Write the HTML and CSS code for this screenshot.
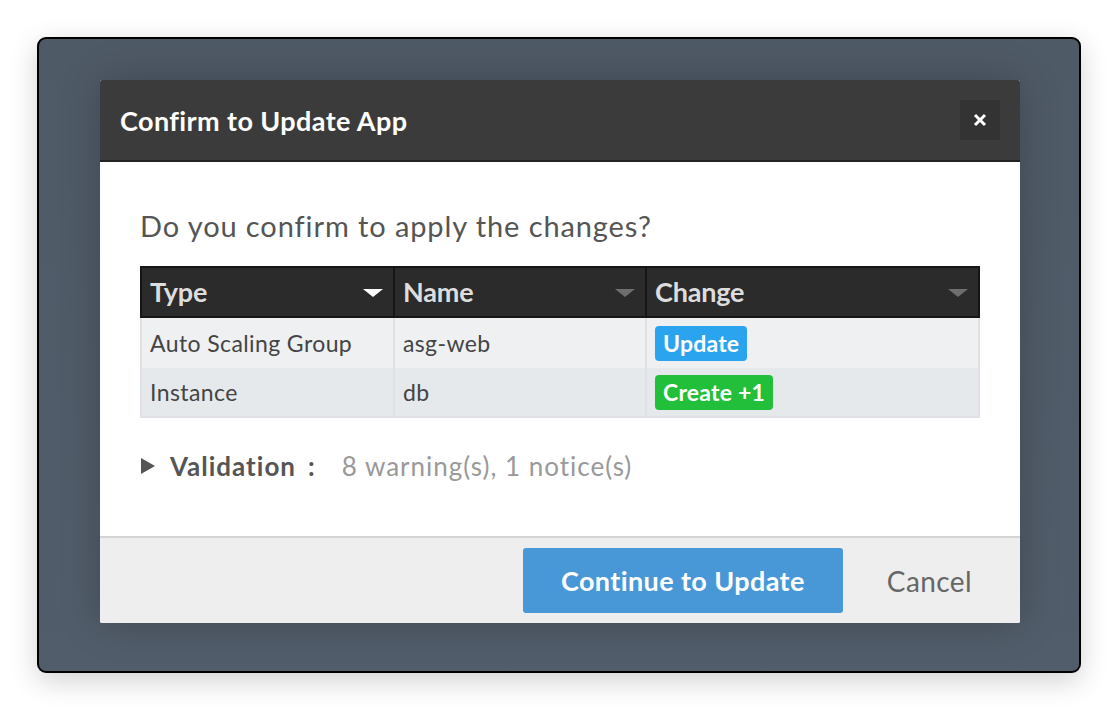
FILE: index.html
```html
<!DOCTYPE html>
<html>
<head>
<meta charset="utf-8">
<link rel="stylesheet" href="styles.css">
</head>
<body>
<div class="window">
  <div class="dialog">
    <div class="dlg-head">
      <div class="dlg-title">Confirm to Update App</div>
      <div class="dlg-close">
        <svg width="16" height="16" viewBox="0 0 16 16"><path d="M3 3 L13 13 M13 3 L3 13" stroke="#fff" stroke-width="3" stroke-linecap="butt" fill="none"/></svg>
      </div>
    </div>
    <div class="dlg-body">
      <div class="question">Do you confirm to apply the changes?</div>
      <table class="tbl">
        <thead>
          <tr>
            <th class="c1"><span>Type</span><i class="sort active"></i></th>
            <th class="c2"><span>Name</span><i class="sort"></i></th>
            <th class="c3"><span>Change</span><i class="sort"></i></th>
          </tr>
        </thead>
        <tbody>
          <tr class="r1">
            <td>Auto Scaling Group</td>
            <td>asg-web</td>
            <td><span class="badge update">Update</span></td>
          </tr>
          <tr class="r2">
            <td>Instance</td>
            <td>db</td>
            <td><span class="badge create">Create +1</span></td>
          </tr>
        </tbody>
      </table>
      <div class="validation">
        <i class="tri"></i>
        <span class="v-label">Validation</span>
        <span class="v-colon">:</span>
        <span class="v-info">8 warning(s), 1 notice(s)</span>
      </div>
    </div>
    <div class="dlg-foot">
      <button class="btn-primary">Continue to Update</button>
      <button class="btn-link">Cancel</button>
    </div>
  </div>
</div>
</body>
</html>
```

FILE: styles.css
```css
html, body {
  margin: 0;
  padding: 0;
  background: #ffffff;
  font-family: Lato, "Open Sans", "Liberation Sans", sans-serif;
}
body {
  padding: 37px 0 0 37px;
  height: 710px;
  box-sizing: border-box;
}
.window {
  width: 1044px;
  height: 636px;
  box-sizing: border-box;
  border: 2px solid #000;
  border-radius: 9px;
  background: linear-gradient(180deg, #4f5a67 0%, #525d6b 100%);
  box-shadow: 0 8px 28px rgba(0, 0, 0, 0.18);
  padding: 41px 59px 0 61px;
}
.dialog {
  width: 920px;
  height: 543px;
  display: flex;
  flex-direction: column;
  background: #fff;
  box-shadow: 0 0 40px rgba(0, 0, 0, 0.22);
  border-radius: 2px;
  overflow: hidden;
}
.dlg-head {
  height: 80px;
  background: #3b3b3b;
  border-bottom: 2px solid #222;
  display: flex;
  align-items: center;
  justify-content: space-between;
  padding: 0 20px;
  flex: none;
}
.dlg-title {
  color: #fff;
  font-weight: 700;
  font-size: 27px;
  letter-spacing: 0.4px;
}
.dlg-close {
  width: 40px;
  height: 40px;
  background: #333;
  border-radius: 3px;
  display: flex;
  align-items: center;
  justify-content: center;
}
.dlg-body {
  flex: 1;
  padding: 47px 40px 0 40px;
}
.question {
  font-size: 29px;
  color: #555;
  line-height: 34px;
  letter-spacing: 0.9px;
}
.tbl {
  margin-top: 23px;
  width: 840px;
  border-collapse: collapse;
  table-layout: fixed;
}
.tbl th {
  background: #2b2b2b;
  color: #ddd;
  font-size: 27px;
  font-weight: 700;
  text-align: left;
  height: 50px;
  padding: 0 22px 2px 8px;
  border: 2px solid #161616;
  position: relative;
  letter-spacing: -0.2px;
  box-sizing: border-box;
}
.tbl th.c1 { width: 253px; }
.tbl th.c2 { width: 252px; }
.sort {
  position: absolute;
  right: 10px;
  top: 50%;
  margin-top: -3px;
  width: 0;
  height: 0;
  border-left: 10px solid transparent;
  border-right: 10px solid transparent;
  border-top: 8px solid #6e6e6e;
}
.sort.active { border-top-color: #fff; }
.tbl td {
  font-size: 23px;
  color: #444;
  padding: 0 8px;
  letter-spacing: 0.4px;
  border-left: 2px solid #dfe1e4;
  border-right: 2px solid #dfe1e4;
}
.tbl tr.r1 td { background: #eef0f2; height: 50px; }
.tbl tr.r2 td { background: #e6e9ec; height: 48px; border-bottom: 2px solid #dfe1e4; }
.badge {
  display: inline-block;
  color: #fff;
  font-weight: 700;
  font-size: 23px;
  line-height: 35px;
  padding: 0 8px;
  border-radius: 4px;
  letter-spacing: 0.2px;
}
.badge.update { background: #2ba4ef; }
.badge.create { background: #22bf3b; }
.validation {
  margin-top: 32px;
  display: flex;
  align-items: center;
  font-size: 26px;
  line-height: 32px;
  letter-spacing: 1px;
}
.tri {
  width: 0;
  height: 0;
  border-top: 8px solid transparent;
  border-bottom: 8px solid transparent;
  border-left: 14px solid #555;
  margin: 0 15px 0 1px;
}
.v-label {
  color: #555;
  font-weight: 700;
}
.v-colon {
  color: #555;
  font-weight: 700;
  margin-left: 12px;
}
.v-info {
  color: #999;
  margin-left: 26px;
}
.dlg-foot {
  height: 87px;
  flex: none;
  background: #eee;
  border-top: 2px solid #d4d4d4;
  display: flex;
  align-items: center;
  justify-content: flex-end;
  padding: 0 48px 0 0;
  box-sizing: border-box;
}
.btn-primary {
  width: 320px;
  height: 65px;
  background: #4897d6;
  color: #fff;
  border: none;
  border-radius: 3px;
  font-family: Lato, "Open Sans", sans-serif;
  font-weight: 700;
  font-size: 27px;
  letter-spacing: 0.4px;
}
.btn-link {
  background: none;
  border: none;
  color: #666;
  font-family: Lato, "Open Sans", sans-serif;
  font-size: 28px;
  letter-spacing: 0.4px;
  margin-left: 44px;
  padding: 0;
}
```
